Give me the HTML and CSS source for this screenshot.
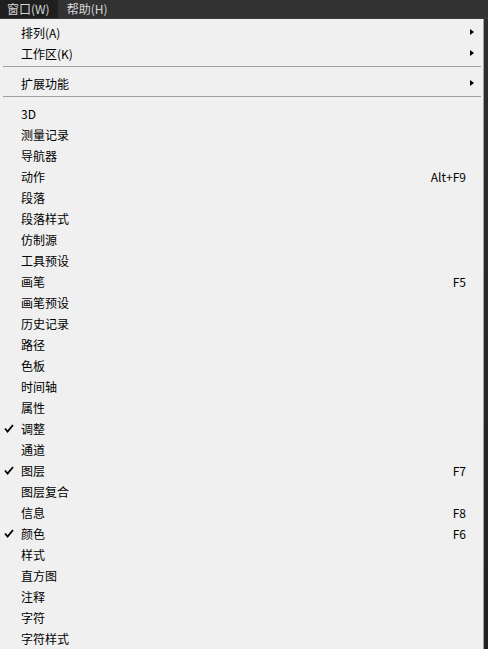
FILE: index.html
```html
<!DOCTYPE html>
<html lang="zh-CN">
<head>
<meta charset="utf-8">
<title>窗口菜单</title>
<link rel="stylesheet" href="styles.css">
</head>
<body>
<div class="menubar">
  <div class="mb-item active">窗口(W)</div>
  <div class="mb-item">帮助(H)</div>
</div>
<div class="wrap">
<div class="menu">
  <div class="item"><span class="label">排列(A)</span><span class="arrow"></span></div>
  <div class="item"><span class="label">工作区(K)</span><span class="arrow"></span></div>
  <div class="sep"></div>
  <div class="item"><span class="label">扩展功能</span><span class="arrow"></span></div>
  <div class="sep"></div>
  <div class="item"><span class="label">3D</span></div>
  <div class="item"><span class="label">测量记录</span></div>
  <div class="item"><span class="label">导航器</span></div>
  <div class="item"><span class="label">动作</span><span class="key">Alt+F9</span></div>
  <div class="item"><span class="label">段落</span></div>
  <div class="item"><span class="label">段落样式</span></div>
  <div class="item"><span class="label">仿制源</span></div>
  <div class="item"><span class="label">工具预设</span></div>
  <div class="item"><span class="label">画笔</span><span class="key">F5</span></div>
  <div class="item"><span class="label">画笔预设</span></div>
  <div class="item"><span class="label">历史记录</span></div>
  <div class="item"><span class="label">路径</span></div>
  <div class="item"><span class="label">色板</span></div>
  <div class="item"><span class="label">时间轴</span></div>
  <div class="item"><span class="label">属性</span></div>
  <div class="item"><svg class="check" width="10" height="9" viewBox="0 0 10 9"><path d="M1 4.5 L3.6 7.5 L9 1" fill="none" stroke="#000" stroke-width="1.8"/></svg><span class="label">调整</span></div>
  <div class="item"><span class="label">通道</span></div>
  <div class="item"><svg class="check" width="10" height="9" viewBox="0 0 10 9"><path d="M1 4.5 L3.6 7.5 L9 1" fill="none" stroke="#000" stroke-width="1.8"/></svg><span class="label">图层</span><span class="key">F7</span></div>
  <div class="item"><span class="label">图层复合</span></div>
  <div class="item"><span class="label">信息</span><span class="key">F8</span></div>
  <div class="item"><svg class="check" width="10" height="9" viewBox="0 0 10 9"><path d="M1 4.5 L3.6 7.5 L9 1" fill="none" stroke="#000" stroke-width="1.8"/></svg><span class="label">颜色</span><span class="key">F6</span></div>
  <div class="item"><span class="label">样式</span></div>
  <div class="item"><span class="label">直方图</span></div>
  <div class="item"><span class="label">注释</span></div>
  <div class="item"><span class="label">字符</span></div>
  <div class="item"><span class="label">字符样式</span></div>
</div>
<div class="side"></div>
</div>
</body>
</html>
```
FILE: styles.css
```css
html, body {
  margin: 0;
  padding: 0;
  height: 649px;
  overflow: hidden;
  background: #2b2b2b;
}
body {
  font-family: "Noto Sans CJK SC", "Noto Sans", sans-serif;
  font-size: 12px;
  color: #000;
}
.menubar {
  display: flex;
  height: 19px;
  background: #323232;
  border-bottom: 1px solid #3a3a3a;
  box-sizing: border-box;
}
.mb-item {
  color: #d6d6d6;
  line-height: 17px;
  padding: 0 8px 0 7px;
}
.mb-item.active {
  background: #1f1f1f;
}
.mb-item + .mb-item {
  padding-left: 9px;
}
.wrap {
  display: flex;
  height: 630px;
}
.menu {
  width: 484px;
  background: #f0f0f0;
  border-right: 1px solid #a0a0a0;
  padding-top: 3px;
  box-sizing: border-box;
  flex: none;
}
.side {
  flex: 1;
  background: linear-gradient(#2e2e2e, #1c241c);
}
.item {
  position: relative;
  display: flex;
  align-items: center;
  height: 21px;
  padding-left: 21px;
  padding-right: 17px;
  line-height: 20px;
}
.label {
  flex: 1;
}
.key {
  text-align: right;
}
.arrow {
  position: absolute;
  right: 9px;
  top: 7px;
  width: 0;
  height: 0;
  border-top: 3.5px solid transparent;
  border-bottom: 3.5px solid transparent;
  border-left: 4px solid #000;
}
.check {
  position: absolute;
  left: 4px;
  top: 6px;
}
.sep {
  height: 9px;
  box-sizing: border-box;
  padding-top: 2px;
  margin: 0 2px 0 3px;
}
.sep::before {
  content: "";
  display: block;
  height: 1px;
  background: #a0a0a0;
}
```
